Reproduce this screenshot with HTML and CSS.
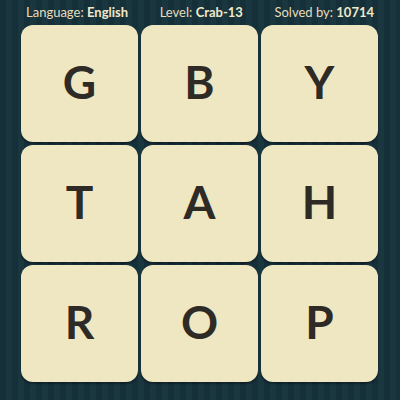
FILE: index.html
```html
<!DOCTYPE html>
<html>
<head>
<meta charset="utf-8">
<link rel="stylesheet" href="styles.css">
</head>
<body>
<div class="page">
  <div class="header">
    <span class="item">Language: <b>English</b></span>
    <span class="item">Level: <b>Crab-13</b></span>
    <span class="item">Solved by: <b>10714</b></span>
  </div>
  <div class="grid">
    <div class="tile">G</div>
    <div class="tile">B</div>
    <div class="tile">Y</div>
    <div class="tile">T</div>
    <div class="tile">A</div>
    <div class="tile">H</div>
    <div class="tile">R</div>
    <div class="tile">O</div>
    <div class="tile">P</div>
  </div>
</div>
</body>
</html>
```
FILE: styles.css
```css
html, body {
  margin: 0;
  padding: 0;
}
body {
  width: 400px;
  height: 400px;
  overflow: hidden;
  background-color: #16303a;
  background-image: repeating-linear-gradient(90deg, #16303a 0px, #16303a 6px, #1a363f 6px, #1a363f 12px);
  font-family: "Lato", "Open Sans", sans-serif;
}
.page {
  display: flex;
  flex-direction: column;
  align-items: center;
}
.header {
  width: 400px;
  box-sizing: border-box;
  height: 25px;
  padding: 0 26px 0 26px;
  display: flex;
  justify-content: space-between;
  align-items: center;
  color: #e6ddbd;
  font-size: 13px;
  line-height: 1;
}
.header b {
  font-weight: 700;
  color: #f1e9c8;
}
.grid {
  display: grid;
  grid-template-columns: repeat(3, 117px);
  grid-template-rows: repeat(3, 117px);
  gap: 3px;
  margin-left: -1px;
}
.tile {
  background: #efe7c1;
  border-radius: 12px;
  box-shadow: 0 2px 2px rgba(0,0,0,0.35);
  display: flex;
  align-items: center;
  justify-content: center;
  color: #2e2a25;
  font-family: "Lato", sans-serif;
  font-weight: 700;
  font-size: 46px;
  padding-bottom: 4px;
  box-sizing: border-box;
}
```
